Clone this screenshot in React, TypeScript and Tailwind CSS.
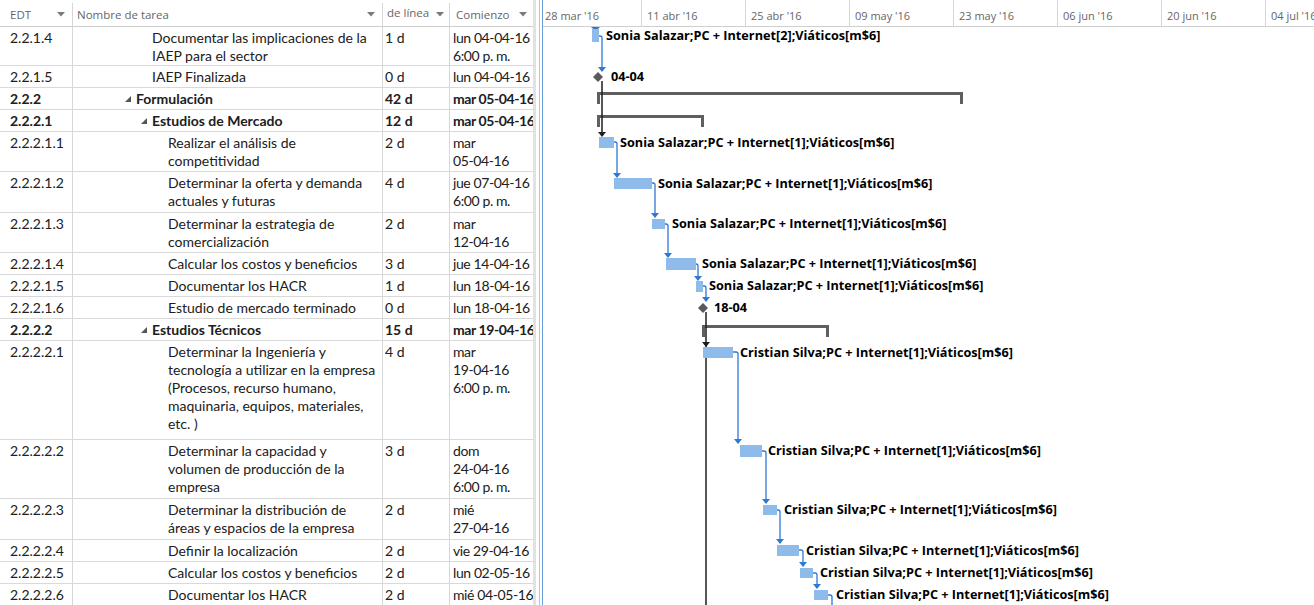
import React from 'react'

type Row = {
  edt: string
  name: string[]
  dur: string
  start: string[]
  x: number
  h: number
  bold?: boolean
  summary?: boolean
}

const rows: Row[] = [
  { edt: '2.2.1.4', name: ['Documentar las implicaciones de la', 'IAEP para el sector'], dur: '1 d', start: ['lun 04-04-16', '6:00 p. m.'], x: 152, h: 39 },
  { edt: '2.2.1.5', name: ['IAEP Finalizada'], dur: '0 d', start: ['lun 04-04-16'], x: 152, h: 22 },
  { edt: '2.2.2', name: ['Formulación'], dur: '42 d', start: ['mar 05-04-16'], x: 136, h: 22, bold: true, summary: true },
  { edt: '2.2.2.1', name: ['Estudios de Mercado'], dur: '12 d', start: ['mar 05-04-16'], x: 152, h: 22, bold: true, summary: true },
  { edt: '2.2.2.1.1', name: ['Realizar el análisis de', 'competitividad'], dur: '2 d', start: ['mar', '05-04-16'], x: 168, h: 40 },
  { edt: '2.2.2.1.2', name: ['Determinar la oferta y demanda', 'actuales y futuras'], dur: '4 d', start: ['jue 07-04-16', '6:00 p. m.'], x: 168, h: 41 },
  { edt: '2.2.2.1.3', name: ['Determinar la estrategia de', 'comercialización'], dur: '2 d', start: ['mar', '12-04-16'], x: 168, h: 40 },
  { edt: '2.2.2.1.4', name: ['Calcular los costos y beneficios'], dur: '3 d', start: ['jue 14-04-16'], x: 168, h: 22 },
  { edt: '2.2.2.1.5', name: ['Documentar los HACR'], dur: '1 d', start: ['lun 18-04-16'], x: 168, h: 22 },
  { edt: '2.2.2.1.6', name: ['Estudio de mercado terminado'], dur: '0 d', start: ['lun 18-04-16'], x: 168, h: 22 },
  { edt: '2.2.2.2', name: ['Estudios Técnicos'], dur: '15 d', start: ['mar 19-04-16'], x: 152, h: 22, bold: true, summary: true },
  {
    edt: '2.2.2.2.1',
    name: ['Determinar la Ingeniería y', 'tecnología a utilizar en la empresa', '(Procesos, recurso humano,', 'maquinaria, equipos, materiales,', 'etc. )'],
    dur: '4 d',
    start: ['mar', '19-04-16', '6:00 p. m.'],
    x: 168,
    h: 99,
  },
  { edt: '2.2.2.2.2', name: ['Determinar la capacidad y', 'volumen de producción de la', 'empresa'], dur: '3 d', start: ['dom', '24-04-16', '6:00 p. m.'], x: 168, h: 59 },
  { edt: '2.2.2.2.3', name: ['Determinar la distribución de', 'áreas y espacios de la empresa'], dur: '2 d', start: ['mié', '27-04-16'], x: 168, h: 41 },
  { edt: '2.2.2.2.4', name: ['Definir la localización'], dur: '2 d', start: ['vie 29-04-16'], x: 168, h: 22 },
  { edt: '2.2.2.2.5', name: ['Calcular los costos y beneficios'], dur: '2 d', start: ['lun 02-05-16'], x: 168, h: 22 },
  { edt: '2.2.2.2.6', name: ['Documentar los HACR'], dur: '2 d', start: ['mié 04-05-16'], x: 168, h: 22 },
]

// chart origin on the page
const GX = 543
const GY = 27

const sonia = 'Sonia Salazar;PC + Internet[1];Viáticos[m$6]'
const cristian = 'Cristian Silva;PC + Internet[1];Viáticos[m$6]'

const bars = [
  { x: 592, y: 29, w: 7, h: 13, label: 'Sonia Salazar;PC + Internet[2];Viáticos[m$6]', lx: 606, ly: 35 },
  { x: 599, y: 137, w: 15, h: 11, label: sonia, lx: 620, ly: 142 },
  { x: 614, y: 178, w: 38, h: 11, label: sonia, lx: 658, ly: 183 },
  { x: 652, y: 219, w: 13, h: 10, label: sonia, lx: 672, ly: 223 },
  { x: 666, y: 258, w: 30, h: 12, label: sonia, lx: 702, ly: 263 },
  { x: 696, y: 281, w: 7, h: 11, label: sonia, lx: 709, ly: 285 },
  { x: 703, y: 347, w: 30, h: 11, label: cristian, lx: 740, ly: 352 },
  { x: 740, y: 445, w: 22, h: 12, label: cristian, lx: 768, ly: 450 },
  { x: 763, y: 505, w: 14, h: 10, label: cristian, lx: 784, ly: 509 },
  { x: 777, y: 545, w: 22, h: 11, label: cristian, lx: 806, ly: 550 },
  { x: 800, y: 568, w: 13, h: 10, label: cristian, lx: 820, ly: 572 },
  { x: 814, y: 590, w: 14, h: 10, label: cristian, lx: 836, ly: 594 },
]

const milestones = [
  { cx: 598, cy: 77, label: '04-04', lx: 611, ly: 76 },
  { cx: 703, cy: 308, label: '18-04', lx: 714, ly: 307 },
]

// from bar end, turn, arrow tip
const links: [number, number, number, number][] = [
  [599, 36, 602, 72],
  [614, 142, 617, 178],
  [652, 183, 655, 218],
  [665, 224, 668, 258],
  [696, 264, 698, 281],
  [703, 286, 706, 302],
  [733, 352, 738, 444],
  [762, 451, 766, 504],
  [777, 510, 780, 544],
  [799, 550, 803, 567],
  [813, 573, 817, 589],
  [828, 595, 832, 640],
]

const summaries = [
  { x1: 597, x2: 963, y: 92 },
  { x1: 597, x2: 704, y: 115 },
  { x1: 702, x2: 829, y: 325 },
]

const scale = ["28 mar '16", "11 abr '16", "25 abr '16", "09 may '16", "23 may '16", "06 jun '16", "20 jun '16", "04 jul '16"]

function DropArrow() {
  return (
    <svg width="8" height="5" viewBox="0 0 8 5" className="shrink-0">
      <polygon points="0,0 8,0 4,4.5" fill="#7a7a7a" />
    </svg>
  )
}

function Collapse() {
  return (
    <svg width="6" height="6" viewBox="0 0 6 6" className="shrink-0">
      <polygon points="6,0 6,6 0,6" fill="#555" />
    </svg>
  )
}

function TaskGrid() {
  return (
    <div className="w-[533px] shrink-0 font-['Lato',sans-serif] text-[14px] leading-[18px] text-[#202020]">
      <div className="flex h-[27px] border-b border-[#cfcfcf] pt-[3px] font-['Open_Sans',sans-serif] text-[11.5px] text-[#666]">
        <div className="flex w-[73px] items-center justify-between border-r border-[#d6d6d6] pl-[10px] pr-[7px]">
          <span>EDT</span>
          <DropArrow />
        </div>
        <div className="flex w-[310px] items-center justify-between border-r border-[#d6d6d6] pl-[4px] pr-[7px]">
          <span>Nombre de tarea</span>
          <DropArrow />
        </div>
        <div className="flex w-[67px] items-center justify-between border-r border-[#d6d6d6] pl-[4px] pr-[5px]">
          <span className="-mt-[3px]">de línea</span>
          <DropArrow />
        </div>
        <div className="flex w-[83px] items-center justify-between pl-[6px] pr-[6px]">
          <span>Comienzo</span>
          <DropArrow />
        </div>
      </div>
      {rows.map((r) => (
        <div
          key={r.edt}
          className={`flex border-b border-[#d9d9d9] ${r.bold ? 'font-bold' : ''}`}
          style={{ height: r.h }}
        >
          <div className="w-[73px] shrink-0 border-r border-[#d6d6d6] pl-[10px] pt-[2px]">{r.edt}</div>
          <div className="w-[310px] shrink-0 border-r border-[#d6d6d6] pt-[2px]" style={{ paddingLeft: r.x - 73 - (r.summary ? 11 : 0) }}>
            {r.name.map((line, i) => (
              <div key={i} className="flex items-center gap-[5px] whitespace-nowrap">
                {r.summary && <Collapse />}
                <span>{line}</span>
              </div>
            ))}
          </div>
          <div className="w-[67px] shrink-0 border-r border-[#d6d6d6] pl-[2px] pt-[2px]">{r.dur}</div>
          <div className="w-[83px] shrink-0 overflow-hidden pl-[3px] pt-[2px] tracking-[-0.4px]">
            {r.start.map((line, i) => (
              <div key={i} className="whitespace-nowrap">
                {line}
              </div>
            ))}
          </div>
        </div>
      ))}
    </div>
  )
}

function Splitter() {
  return (
    <div className="flex h-full w-[10px] shrink-0">
      <div className="w-[3px] bg-[#e2e2e2]" />
      <div className="w-[3px] bg-white" />
      <div className="w-[1px] bg-[#c4c4c4]" />
      <div className="w-[2px] bg-white" />
      <div className="w-[1px] bg-[#6a9fdc]" />
    </div>
  )
}

function Chart() {
  return (
    <div className="flex min-w-0 flex-1 flex-col">
      <div className="flex h-[27px] shrink-0 border-b border-[#cfcfcf] font-['Open_Sans',sans-serif] text-[11px] text-[#666]">
        {scale.map((s, i) => (
          <div
            key={s}
            className={`flex shrink-0 items-end pb-[2px] ${i === 0 ? 'w-[98px] pl-[2px]' : 'w-[104px] border-l border-[#d6d6d6] pl-[5px]'}`}
          >
            <span className="whitespace-nowrap">{s}</span>
          </div>
        ))}
      </div>
      <div className="relative flex-1 overflow-hidden">
        <svg className="absolute left-0 top-0" width="771" height="600">
          <g transform={`translate(${-GX} ${-GY})`}>
            {summaries.map((s, i) => (
              <path
                key={i}
                d={`M${s.x1 + 1.5} ${s.y + 12} V${s.y + 1.5} H${s.x2 - 1.5} V${s.y + 12}`}
                fill="none"
                stroke="#5f5f5f"
                strokeWidth="3"
              />
            ))}
            {/* incoming link from the task above the view */}
            <polygon points="591,27 600,27 595.5,31" fill="#2f78d6" />
            {links.map(([x1, y, x2, tip], i) => (
              <g key={i}>
                <path d={`M${x1} ${y} H${x2 - 2} Q${x2} ${y} ${x2} ${y + 2} V${tip - 4}`} fill="none" stroke="#2f78d6" strokeWidth="1.3" />
                <polygon points={`${x2 - 4},${tip - 5} ${x2 + 4},${tip - 5} ${x2},${tip}`} fill="#2f78d6" />
              </g>
            ))}
            {/* milestone successors */}
            <path d="M602 81 V133" stroke="#1e1e1e" strokeWidth="1.5" />
            <polygon points="598,132 606,132 602,137" fill="#1e1e1e" />
            <path d="M706 312 V700" stroke="#1e1e1e" strokeWidth="1.5" />
            <polygon points="702,342 710,342 706,347" fill="#1e1e1e" />
            {milestones.map((m) => (
              <polygon
                key={m.label}
                points={`${m.cx},${m.cy - 5} ${m.cx + 5},${m.cy} ${m.cx},${m.cy + 5} ${m.cx - 5},${m.cy}`}
                fill="#5a5a5a"
              />
            ))}
          </g>
        </svg>
        {bars.map((b, i) => (
          <div
            key={i}
            className="absolute bg-[#8fbbea]"
            style={{ left: b.x - GX, top: b.y - GY, width: b.w, height: b.h }}
          />
        ))}
        {[...bars, ...milestones].map((b, i) => (
          <div
            key={'l' + i}
            className="absolute whitespace-nowrap font-['Open_Sans',sans-serif] text-[12.7px] font-bold leading-[18px] text-black"
            style={{ left: b.lx - GX, top: b.ly - GY - 9 }}
          >
            {b.label}
          </div>
        ))}
      </div>
    </div>
  )
}

export default function App() {
  return (
    <div className="flex h-[605px] w-[1314px] overflow-hidden bg-white">
      <TaskGrid />
      <Splitter />
      <Chart />
    </div>
  )
}
